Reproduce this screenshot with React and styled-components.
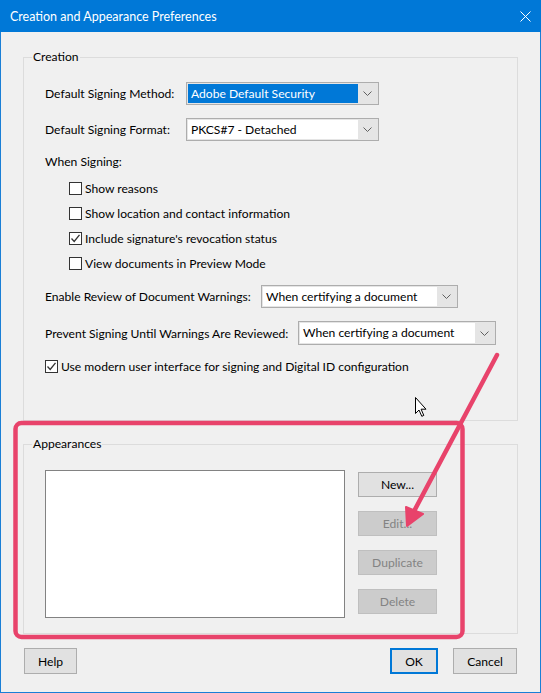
import React from 'react';
import styled, { createGlobalStyle } from 'styled-components';

const GlobalStyle = createGlobalStyle`
  html, body {
    margin: 0;
    padding: 0;
    background: #f0f0f0;
  }

  body {
    font-family: Lato, "Noto Sans", sans-serif;
    font-size: 12.1px;
    color: #000;
  }

  * {
    box-sizing: border-box;
  }
`;

const Window = styled.div`
  position: relative;
  display: flex;
  flex-direction: column;
  width: 541px;
  height: 693px;
  border: 1px solid #1a7fd6;
  border-top: none;
  background: #f0f0f0;
`;

const TitleBar = styled.div`
  display: flex;
  align-items: center;
  justify-content: space-between;
  height: 32px;
  margin: 0 -1px;
  padding: 0 10px 0 10px;
  background: #0078d7;
  color: #fff;
  font-size: 12.5px;
`;

const Body = styled.div`
  display: flex;
  flex-direction: column;
  padding: 0 22px;
`;

const Group = styled.fieldset`
  min-width: 0;
  margin: ${p => p.$mt}px 0 0;
  padding: 0;
  border: 1px solid #dcdcdc;
`;

const Legend = styled.legend`
  margin-left: 8px;
  padding: 0 1px;
  line-height: 16px;
`;

const GroupBody = styled.div`
  display: flex;
  flex-direction: column;
  padding: ${p => p.$pt}px 21px ${p => p.$pb}px;
`;

const Row = styled.div`
  display: flex;
  align-items: center;
  height: ${p => p.$h || 23}px;
  margin-top: ${p => p.$mt || 0}px;
  padding-left: ${p => p.$indent || 0}px;
  white-space: nowrap;
`;

const Label = styled.div`
  width: ${p => p.$w}px;
  flex: none;
`;

const Combo = styled.div`
  display: flex;
  width: ${p => p.$w}px;
  height: ${p => p.$h || 23}px;
  padding: 1px;
  border: 1px solid #adadad;
  background: #e5e5e5;
`;

const ComboText = styled.div`
  flex: 1;
  padding-left: 3px;
  line-height: 19px;
  background: ${p => (p.$selected ? '#0078d7' : '#fff')};
  color: ${p => (p.$selected ? '#fff' : '#000')};
`;

const ComboArrow = styled.div`
  display: flex;
  align-items: center;
  justify-content: center;
  width: 19px;
`;

const Box = styled.span`
  display: inline-flex;
  align-items: center;
  justify-content: center;
  width: 13px;
  height: 13px;
  margin-right: 3px;
  border: 1px solid #333;
  background: #fff;
`;

const AppearRow = styled.div`
  display: flex;
  align-items: flex-start;
  gap: 13px;
`;

const ListBox = styled.div`
  width: 300px;
  height: 148px;
  border: 1px solid #828282;
  background: #fff;
`;

const ButtonCol = styled.div`
  display: flex;
  flex-direction: column;
  gap: 14px;
  margin-top: 2px;
`;

const Button = styled.button`
  width: ${p => p.$w || 79}px;
  height: ${p => p.$h || 25}px;
  padding: 0;
  border: ${p => (p.$default ? '2px solid #0078d7' : '1px solid #adadad')};
  background: #e1e1e1;
  color: #000;
  font: inherit;

  &:disabled {
    border-color: #bfbfbf;
    background: #cccccc;
    color: #838383;
  }
`;

const Footer = styled.div`
  display: flex;
  align-items: center;
  margin-top: 14px;
  padding: 0 23px;
  gap: 15px;

  & > :first-child {
    margin-right: auto;
  }
`;

const Overlay = styled.svg`
  position: absolute;
  top: 0;
  left: -1px;
  pointer-events: none;
`;

function Chevron() {
  return (
    <svg width="9" height="5" viewBox="0 0 9 5">
      <path d="M0.5 0.5 L4.5 4.5 L8.5 0.5" fill="none" stroke="#606060" strokeWidth="1" />
    </svg>
  );
}

function Select({ w, h, value, selected }) {
  return (
    <Combo $w={w} $h={h}>
      <ComboText $selected={selected}>{value}</ComboText>
      <ComboArrow><Chevron /></ComboArrow>
    </Combo>
  );
}

function Check({ checked, children, indent, mt }) {
  return (
    <Row $h={16} $indent={indent} $mt={mt}>
      <Box>
        {checked && (
          <svg width="11" height="11" viewBox="0 0 11 11">
            <path d="M1.5 5.5 L4.2 8.5 L9.5 1.8" fill="none" stroke="#333" strokeWidth="1.3" />
          </svg>
        )}
      </Box>
      {children}
    </Row>
  );
}

export default function App() {
  return (
    <>
      <GlobalStyle />
      <Window>
        <TitleBar>
          <span>Creation and Appearance Preferences</span>
          <svg width="11" height="11" viewBox="0 0 11 11">
            <path d="M0.5 0.5 L10.5 10.5 M10.5 0.5 L0.5 10.5" stroke="#fff" strokeWidth="1" />
          </svg>
        </TitleBar>
        <Body>
          <Group $mt={17}>
            <Legend>Creation</Legend>
            <GroupBody $pt={17} $pb={46}>
              <Row>
                <Label $w={141}>Default Signing Method:</Label>
                <Select w={193} value="Adobe Default Security" selected />
              </Row>
              <Row $mt={13}>
                <Label $w={141}>Default Signing Format:</Label>
                <Select w={193} value="PKCS#7 - Detached" />
              </Row>
              <Row $h={16} $mt={12}>When Signing:</Row>
              <Check indent={24} mt={11}>Show reasons</Check>
              <Check indent={24} mt={9}>Show location and contact information</Check>
              <Check indent={24} mt={9} checked>Include signature's revocation status</Check>
              <Check indent={24} mt={9}>View documents in Preview Mode</Check>
              <Row $mt={14}>
                <Label $w={216}>Enable Review of Document Warnings:</Label>
                <Select w={197} value="When certifying a document" />
              </Row>
              <Row $h={24} $mt={13}>
                <Label $w={253}>Prevent Signing Until Warnings Are Reviewed:</Label>
                <Select w={198} h={24} value="When certifying a document" />
              </Row>
              <Check mt={13} checked>Use modern user interface for signing and Digital ID configuration</Check>
            </GroupBody>
          </Group>
          <Group $mt={15}>
            <Legend>Appearances</Legend>
            <GroupBody $pt={18} $pb={15}>
              <AppearRow>
                <ListBox />
                <ButtonCol>
                  <Button>New...</Button>
                  <Button disabled>Edit...</Button>
                  <Button disabled>Duplicate</Button>
                  <Button disabled>Delete</Button>
                </ButtonCol>
              </AppearRow>
            </GroupBody>
          </Group>
        </Body>
        <Footer>
          <Button $w={53} $h={26}>Help</Button>
          <Button $w={48} $h={26} $default>OK</Button>
          <Button $w={64} $h={26}>Cancel</Button>
        </Footer>
        <Overlay width="541" height="693" viewBox="0 0 541 693">
          <rect x="15.5" y="423" width="447" height="214" rx="6" fill="none" stroke="#e8436b" strokeWidth="4.5" />
          <path d="M497 355 L412 515" stroke="#e8436b" strokeWidth="4.5" strokeLinecap="round" />
          <polygon points="407,526 406,507 423,514" fill="#e8436b" stroke="#e8436b" strokeWidth="2" strokeLinejoin="round" />
          <path
            d="M415.5 397.5 L415.5 413.5 L419 410 L421.8 416.3 L423.8 415.4 L421.1 409.2 L426 409.2 Z"
            fill="#fff"
            stroke="#000"
            strokeWidth="1"
            strokeLinejoin="round"
          />
        </Overlay>
      </Window>
    </>
  );
}
